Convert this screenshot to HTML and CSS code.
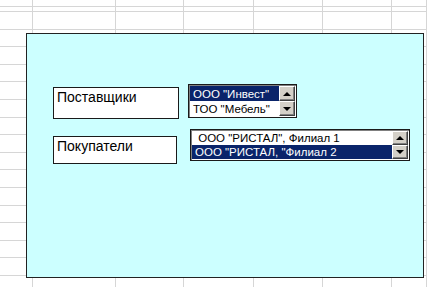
FILE: index.html
```html
<!DOCTYPE html>
<html lang="ru">
<head>
    <meta charset="UTF-8">
    <title>Поставщики и покупатели</title>
    <link rel="stylesheet" href="styles.css">
</head>
<body>

    <div class="sheet">
        <div class="form">

            <!-- Поставщики -->
            <div class="row row-first">
                <div class="caption caption-first">Поставщики</div>
                <div class="listbox listbox-short">
                    <div class="items">
                        <div class="item selected">ООО "Инвест"</div>
                        <div class="item">ТОО "Мебель"</div>
                    </div>
                    <div class="scroll">
                        <div class="btn"><span class="arrow up"></span></div>
                        <div class="btn"><span class="arrow down"></span></div>
                    </div>
                </div>
            </div>

            <!-- Покупатели -->
            <div class="row row-second">
                <div class="caption caption-second">Покупатели</div>
                <div class="listbox listbox-long">
                    <div class="items">
                        <div class="item">&nbsp;ООО "РИСТАЛ", Филиал 1</div>
                        <div class="item selected">ООО "РИСТАЛ, "Филиал 2</div>
                    </div>
                    <div class="scroll">
                        <div class="btn"><span class="arrow up"></span></div>
                        <div class="btn"><span class="arrow down"></span></div>
                    </div>
                </div>
            </div>

        </div>
    </div>

</body>
</html>
```

FILE: styles.css
```css
body {
    margin: 0;
    background: #fff;
    font-family: 'Liberation Sans', Arial, sans-serif;
}

/* Сетка листа Excel */
.sheet {
    width: 427px;
    height: 287px;
    overflow: hidden;
    padding-top: 33px;
    box-sizing: border-box;
    background-color: #fff;
    background-image:
        linear-gradient(to right,
            transparent 32px, #d6d6d6 32px, #d6d6d6 33px,
            transparent 33px, transparent 115px, #d6d6d6 115px, #d6d6d6 116px,
            transparent 116px, transparent 183px, #d6d6d6 183px, #d6d6d6 184px,
            transparent 184px, transparent 253px, #d6d6d6 253px, #d6d6d6 254px,
            transparent 254px, transparent 322px, #d6d6d6 322px, #d6d6d6 323px,
            transparent 323px, transparent 391px, #d6d6d6 391px, #d6d6d6 392px,
            transparent 392px, transparent 426px, #d6d6d6 426px),
        repeating-linear-gradient(to bottom,
            #d6d6d6 0, #d6d6d6 1px, transparent 1px, transparent 17.6px);
    background-position: 0 0, 0 11px;
    background-repeat: no-repeat, repeat;
}

/* Форма */
.form {
    margin-left: 26px;
    width: 398px;
    height: 245px;
    box-sizing: border-box;
    background: #ccffff;
    border: 1px solid #222;
    padding: 50px 0 0 26px;
}

.row {
    display: flex;
    align-items: flex-start;
}
.row-second {
    margin-top: 10px;
}

.caption {
    background: #fff;
    border: 1px solid #1a1a1a;
    box-sizing: border-box;
    font-size: 14px;
    color: #000;
    padding: 1px 0 0 3px;
    line-height: 16px;
}
.caption-first {
    width: 126px;
    height: 32px;
    margin-top: 3px;
}
.caption-second {
    width: 124px;
    height: 28px;
    margin-top: 7px;
}

/* Списки */
.listbox {
    display: flex;
    background: #fff;
    border: 1px solid #1a1a1a;
    box-shadow: inset 1px 1px 0 #808080;
    box-sizing: border-box;
    padding: 1px;
}
.listbox-short {
    width: 109px;
    height: 34px;
    margin-left: 9px;
}
.listbox-long {
    width: 220px;
    height: 32px;
    margin-left: 13px;
}

.items {
    flex: 1;
    display: flex;
    flex-direction: column;
}
.item {
    flex: 1;
    font-size: 11.5px;
    color: #000;
    padding-left: 3px;
    display: flex;
    align-items: center;
    white-space: nowrap;
}
.item.selected {
    background: #0a246a;
    color: #fff;
}

.scroll {
    width: 16px;
    display: flex;
    flex-direction: column;
}
.btn {
    flex: 1;
    background: #d4d0c8;
    border-top: 1px solid #fff;
    border-left: 1px solid #fff;
    border-right: 1px solid #404040;
    border-bottom: 1px solid #404040;
    box-shadow: inset -1px -1px 0 #808080;
    display: flex;
    justify-content: center;
    align-items: center;
}
.arrow {
    width: 0;
    height: 0;
    border-left: 4px solid transparent;
    border-right: 4px solid transparent;
}
.arrow.up {
    border-bottom: 4px solid #000;
}
.arrow.down {
    border-top: 4px solid #000;
}
```
